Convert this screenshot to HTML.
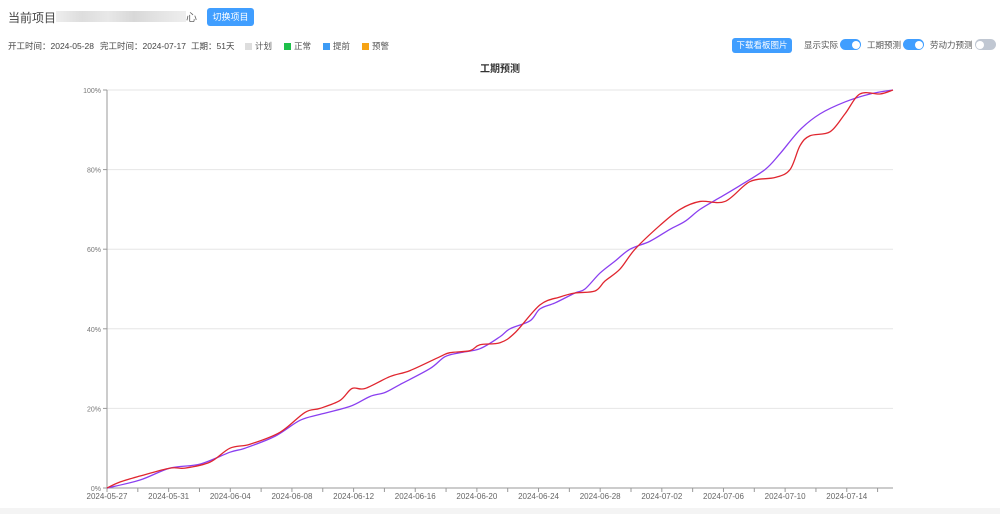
<!DOCTYPE html>
<html><head><meta charset="utf-8"><style>
body{margin:0;width:1000px;height:514px;background:#fff;font-family:"Liberation Sans","Noto Sans CJK SC",sans-serif;overflow:hidden;position:relative;color:#333}
.a{position:absolute;white-space:nowrap}
.btn{background:#409eff;color:#fff;border-radius:3px;font-size:9px;text-align:center}
.sq{display:inline-block;width:7px;height:7px;margin-right:3px;vertical-align:-1px}
.sw{display:inline-block;width:21px;height:11px;border-radius:6px;vertical-align:-2px;position:relative;margin-left:2px}
.sw i{position:absolute;top:1.5px;width:8px;height:8px;border-radius:50%;background:#fff}
</style></head><body>
<div class="a" style="left:8px;top:9px;font-size:12px;color:#444">当前项目:</div>
<div class="a" style="left:56px;top:11px;width:130px;height:11px;background:linear-gradient(90deg,#eee,#ddd 20%,#e8e8e8 40%,#d8d8d8 60%,#e4e4e4 80%,#eee)"></div>
<div class="a" style="left:186px;top:9px;font-size:11px;color:#666">心</div>
<div class="a btn" style="left:207px;top:8px;width:47px;height:18px;line-height:18px">切换项目</div>
<div class="a" style="left:8px;top:40px;font-size:8.5px;color:#444">开工时间：2024-05-28</div>
<div class="a" style="left:100px;top:40px;font-size:8.5px;color:#444">完工时间：2024-07-17</div>
<div class="a" style="left:191px;top:40px;font-size:8.5px;color:#444">工期：51天</div>
<div class="a" style="left:245px;top:40px;font-size:8.5px;color:#555"><span class="sq" style="background:#ddd"></span>计划</div>
<div class="a" style="left:284px;top:40px;font-size:8.5px;color:#555"><span class="sq" style="background:#1ec04a"></span>正常</div>
<div class="a" style="left:323px;top:40px;font-size:8.5px;color:#555"><span class="sq" style="background:#3d9bf5"></span>提前</div>
<div class="a" style="left:362px;top:40px;font-size:8.5px;color:#555"><span class="sq" style="background:#f6a314"></span>预警</div>
<div class="a btn" style="left:732px;top:38px;width:60px;height:15px;line-height:15px;font-size:8.5px">下载看板图片</div>
<div class="a" style="left:804px;top:39px;font-size:8.5px;color:#555">显示实际<span class="sw" style="background:#409eff"><i style="right:1.5px"></i></span></div>
<div class="a" style="left:867px;top:39px;font-size:8.5px;color:#555">工期预测<span class="sw" style="background:#409eff"><i style="right:1.5px"></i></span></div>
<div class="a" style="left:930px;top:39px;font-size:8.5px;color:#555">劳动力预测<span class="sw" style="background:#c0c7d2"><i style="left:1.5px"></i></span></div>
<div class="a" style="left:480px;top:60px;font-size:10px;font-weight:bold;color:#333">工期预测</div>
<svg id="c" class="a" style="left:0;top:0" width="1000" height="514"></svg>
<div class="a" style="left:0;top:508px;width:1000px;height:6px;background:#f4f4f4"></div>
<script>
var s=document.getElementById('c'),h='';
var X0=107,X1=893,Y0=488,Y1=90;
function y(v){return Y0-v*(Y0-Y1)/100}
for(var i=0;i<=5;i++){var yy=y(i*20);
 if(i>0)h+='<line x1="'+X0+'" x2="'+X1+'" y1="'+yy+'" y2="'+yy+'" stroke="#e6e6e6" stroke-width="1"/>';
 h+='<line x1="'+(X0-4)+'" x2="'+X0+'" y1="'+yy+'" y2="'+yy+'" stroke="#999"/>';
 h+='<text x="'+(X0-6)+'" y="'+(yy+3)+'" font-size="7" fill="#777" text-anchor="end">'+(i*20)+'%</text>';}
h+='<line x1="'+X0+'" x2="'+X0+'" y1="'+Y1+'" y2="'+Y0+'" stroke="#999"/>';
h+='<line x1="'+X0+'" x2="'+X1+'" y1="'+Y0+'" y2="'+Y0+'" stroke="#999"/>';
var d=(X1-X0)/51,labels=['2024-05-27','2024-05-31','2024-06-04','2024-06-08','2024-06-12','2024-06-16','2024-06-20','2024-06-24','2024-06-28','2024-07-02','2024-07-06','2024-07-10','2024-07-14'];
for(var k=0;k<=51;k+=2){var xx=X0+k*d;h+='<line x1="'+xx+'" x2="'+xx+'" y1="'+Y0+'" y2="'+(Y0+4)+'" stroke="#999"/>';}
labels.forEach(function(l,j){var xx=X0+j*4*d;h+='<text x="'+xx+'" y="'+(Y0+11)+'" font-size="8" fill="#666" text-anchor="middle">'+l+'</text>';});
var P=[[107,0],[140,2],[170,5],[200,6],[230,9],[245,10],[275,13],[300,17],[320,18.5],[350,20.5],[370,23],[385,24],[400,26],[430,30],[445,33],[460,34],[480,35],[500,38],[510,40],[530,42],[540,45],[555,46.5],[575,49],[585,50],[600,54],[615,57],[630,60],[650,62],[670,65],[685,67],[700,70],[720,73],[740,76],[765,80],[780,84],[800,90],[820,94],[845,97],[870,99],[893,100]];
var R=[[107,0],[120,1.5],[140,3],[170,5],[185,5],[210,6.5],[230,10],[250,11],[280,14],[305,19],[320,20],[340,22],[352,25],[365,25],[390,28],[410,29.5],[440,33],[450,34],[470,34.5],[480,36],[500,36.5],[515,39],[540,46],[560,48],[575,49],[595,49.5],[605,52],[620,55],[635,60],[660,66],[680,70],[700,72],[725,72],[750,77],[775,78],[790,80],[800,86],[810,88.5],[830,89.5],[845,94],[860,99],[880,99],[893,100]];
function path(a){var p=a.map(function(q){return[q[0],y(q[1])]}),s='M'+p[0][0]+' '+p[0][1];
 for(var i=0;i<p.length-1;i++){var p0=p[i-1]||p[i],p1=p[i],p2=p[i+1],p3=p[i+2]||p2;
  s+=' C'+(p1[0]+(p2[0]-p0[0])/6)+' '+(p1[1]+(p2[1]-p0[1])/6)+' '+(p2[0]-(p3[0]-p1[0])/6)+' '+(p2[1]-(p3[1]-p1[1])/6)+' '+p2[0]+' '+p2[1];}
 return s;}
h+='<path d="'+path(P)+'" fill="none" stroke="#8a3ff0" stroke-width="1.3"/>';
h+='<path d="'+path(R)+'" fill="none" stroke="#e0262f" stroke-width="1.3"/>';
s.innerHTML=h;
</script>
</body></html>
